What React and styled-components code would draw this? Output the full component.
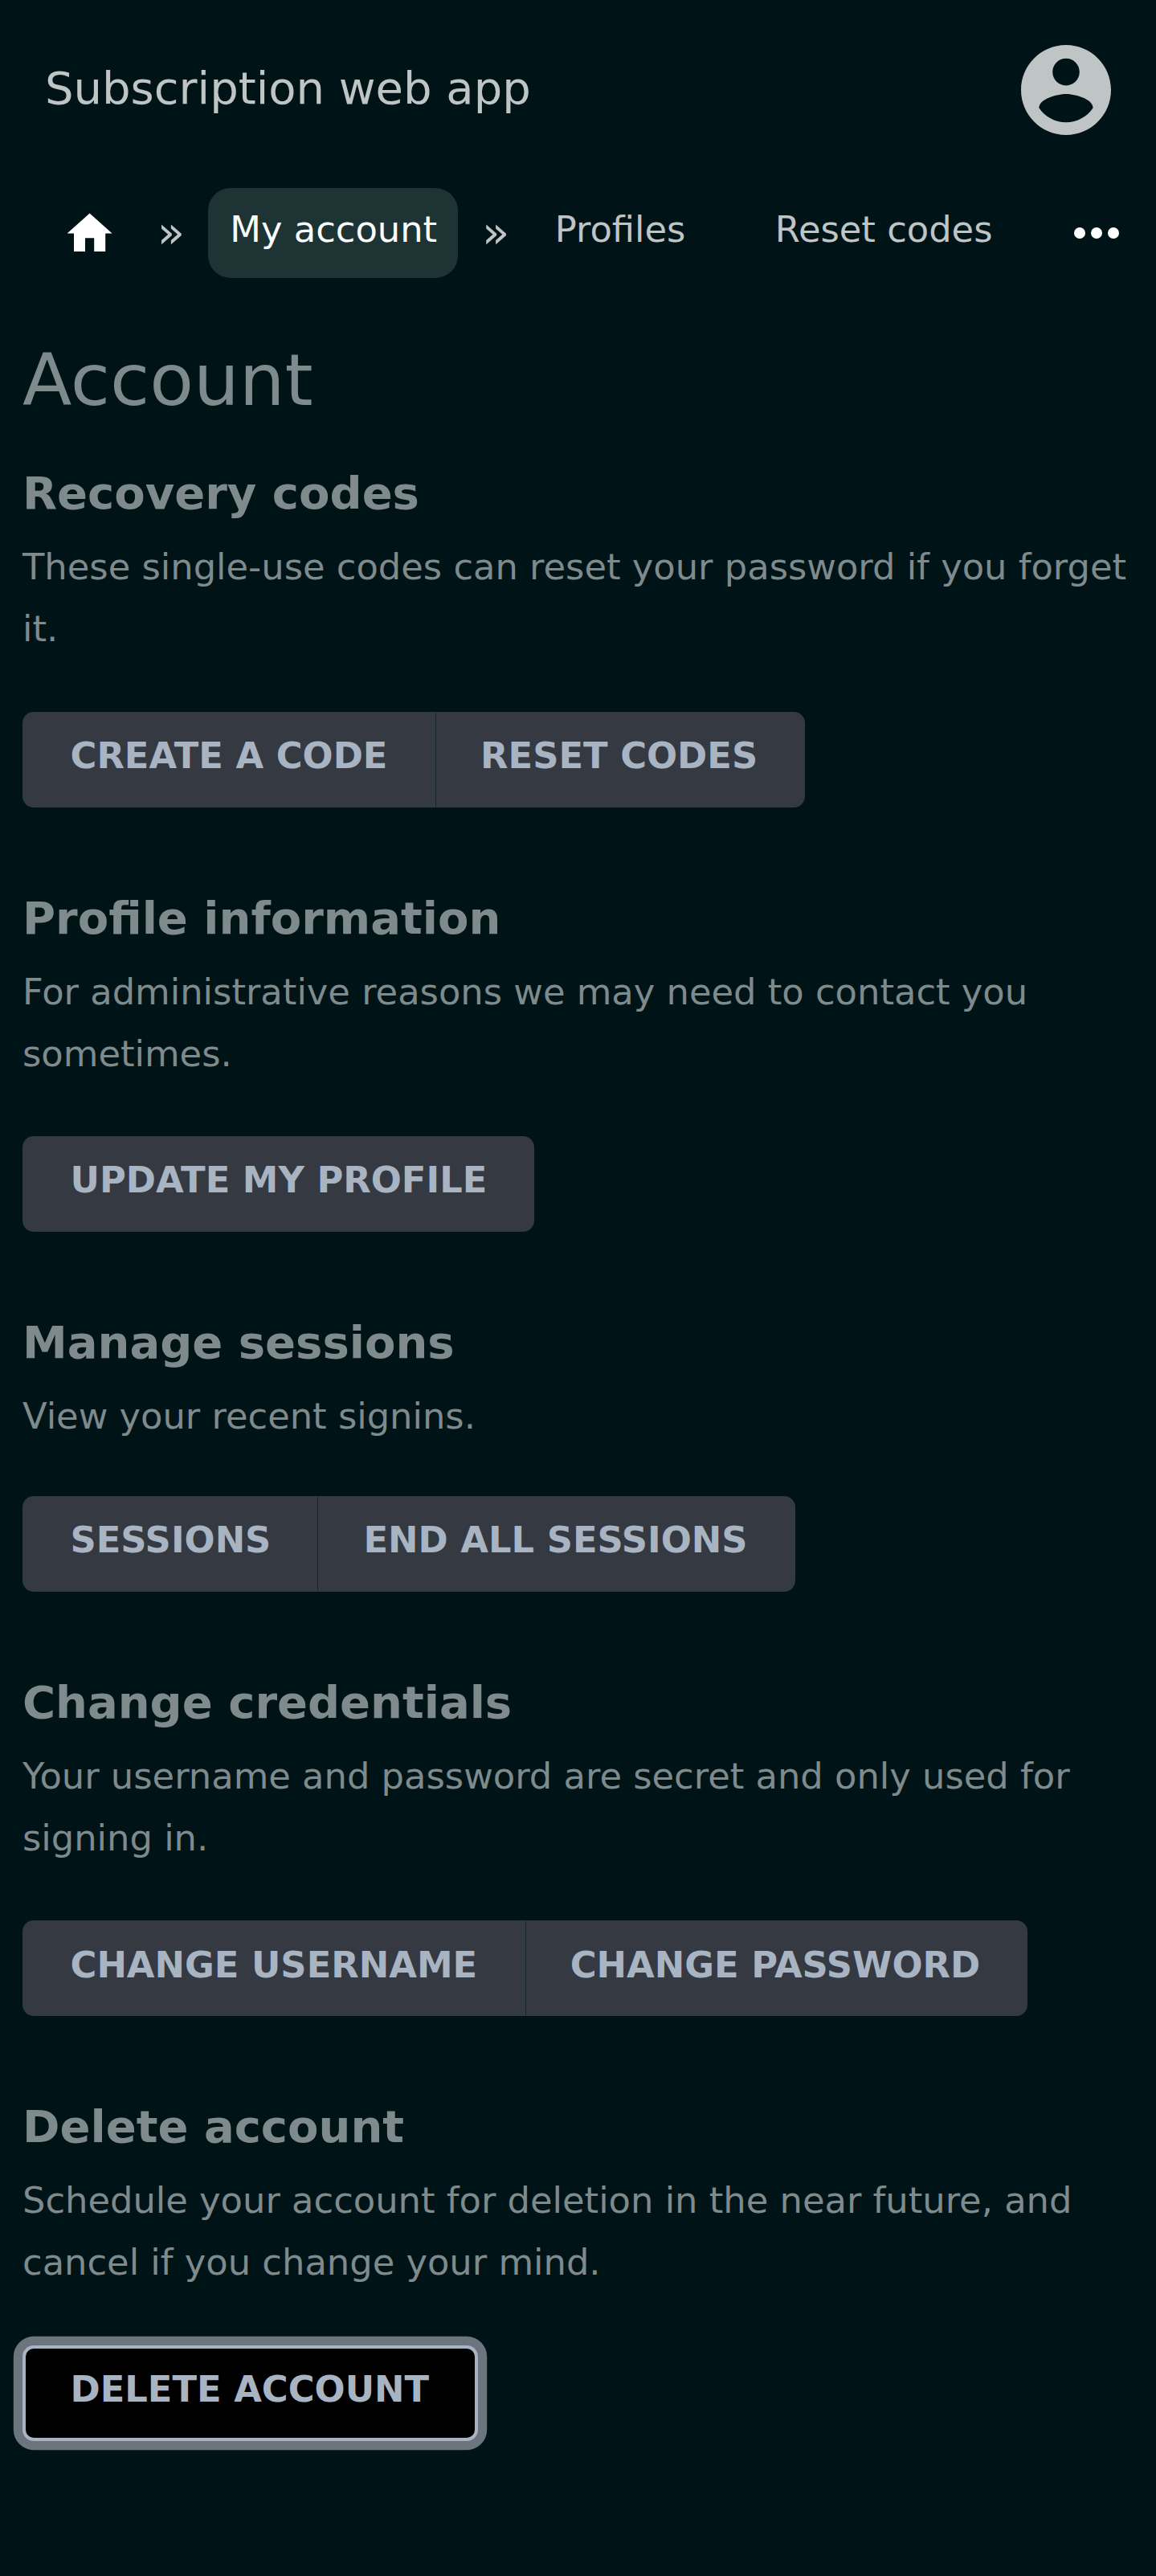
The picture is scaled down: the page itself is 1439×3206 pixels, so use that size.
import React from "react";
import styled, { createGlobalStyle, css } from "styled-components";

const GlobalStyle = createGlobalStyle`
  * { box-sizing: border-box; }
  body {
    margin: 0;
    min-height: 3206px;
    background: #001418;
    color: #7f8a8c;
    font-family: "DejaVu Sans", sans-serif;
    font-size: 44.8px;
    line-height: 77px;
  }
`;

const Header = styled.header`
  display: flex;
  justify-content: space-between;
  align-items: center;
  height: 224px;
  padding: 0 56px;
`;

const Brand = styled.div`
  color: #bfc4c5;
  font-size: 56px;
  line-height: 84px;
  padding-bottom: 5px;
`;

const Avatar = styled.svg`
  width: 112px;
  height: 112px;
  fill: #bfc4c5;
`;

const Nav = styled.nav`
  display: flex;
  align-items: center;
  height: 112px;
  margin-top: 10.3px;
  padding: 0 46px 0 78.4px;
`;

const HomeIcon = styled.svg`
  width: 67.2px;
  height: 67.2px;
  margin-right: 20.2px;
  fill: #fff;
`;

const Separator = styled.span`
  margin: 0 28.8px 0 29.9px;
  padding-bottom: 3px;
  color: #bfc4c5;
  font-size: 56px;
`;

const Crumb = styled.a`
  height: 112px;
  padding: 13px 26px 0 27.6px;
  border-radius: 28px;
  color: #bfc4c5;
  white-space: nowrap;
  margin-right: ${(p) => p.$gap || 0}px;
  ${(p) => p.$active && css`
    background: #1e3334;
    color: #fafbfc;
  `}
`;

const MoreIcon = styled.svg`
  width: 56px;
  height: 14px;
  margin-left: auto;
  fill: #fff;
`;

const Main = styled.main`
  padding: 59.5px 28px 0;
`;

const Title = styled.h1`
  margin: 0 0 26.5px;
  font-size: 89.6px;
  font-weight: 400;
  line-height: 134px;
`;

const Section = styled.section`
  padding-bottom: 90px;
`;

const Heading = styled.h2`
  margin: 0;
  padding-top: 6px;
  font-size: 56px;
  font-weight: 700;
  line-height: 84px;
`;

const Text = styled.p`
  margin: 11px 0 ${(p) => (p.$short ? 60.9 : 64.4)}px;
`;

const ButtonGroup = styled.div`
  display: flex;
`;

const Button = styled.button`
  height: 119px;
  padding: 0 55.8px 9.6px 56.5px;
  border: 3px solid #353941;
  border-radius: 0;
  background: #353941;
  color: #a8b4c2;
  font: 700 44.8px/77px "DejaVu Sans", sans-serif;
  text-transform: uppercase;
  &:first-child {
    border-top-left-radius: 14px;
    border-bottom-left-radius: 14px;
  }
  &:last-child {
    border-top-right-radius: 14px;
    border-bottom-right-radius: 14px;
  }
  &:not(:last-child) {
    border-right: 0;
    padding-right: ${(p) => (p.$short ? 57.5 : 59.6)}px;
  }
  &:nth-child(2) {
    border-left: 1px solid #15252a;
    padding-left: ${(p) => (p.$short ? 56.6 : 55)}px;
    padding-right: 56px;
  }
  ${(p) => p.$focused && css`
    border: 4px solid #a8b4c2;
    padding: 0 57px 9.6px 55.5px;
    background: #000;
    box-shadow: 0 0 0 11.2px #6c757d;
  `}
`;

const sections = [
  { title: "Recovery codes", text: "These single-use codes can reset your password if you forget it.", actions: ["Create a code", "Reset codes"] },
  { title: "Profile information", text: "For administrative reasons we may need to contact you sometimes.", actions: ["Update my profile"] },
  { title: "Manage sessions", text: "View your recent signins.", actions: ["Sessions", "End all sessions"], short: true },
  { title: "Change credentials", text: "Your username and password are secret and only used for signing in.", actions: ["Change username", "Change password"] },
  { title: "Delete account", text: "Schedule your account for deletion in the near future, and cancel if you change your mind.", actions: ["Delete account"], focused: true },
];

export default function App() {
  return (
    <>
      <GlobalStyle />
      <Header>
        <Brand>Subscription web app</Brand>
        <Avatar viewBox="2 2 20 20">
          <path d="M12 2C6.48 2 2 6.48 2 12s4.48 10 10 10 10-4.48 10-10S17.52 2 12 2zm0 3c1.66 0 3 1.34 3 3s-1.34 3-3 3-3-1.34-3-3 1.34-3 3-3zm0 14.2c-2.5 0-4.71-1.28-6-3.22.03-1.99 4-3.08 6-3.08 1.99 0 5.97 1.09 6 3.08-1.29 1.94-3.5 3.22-6 3.22z" />
        </Avatar>
      </Header>
      <Nav>
        <HomeIcon viewBox="0 0 24 24">
          <path d="M10 20v-6h4v6h5v-8h3L12 3 2 12h3v8z" />
        </HomeIcon>
        <Separator>»</Separator>
        <Crumb $active>My account</Crumb>
        <Separator>»</Separator>
        <Crumb $gap={57.8}>Profiles</Crumb>
        <Crumb>Reset codes</Crumb>
        <MoreIcon viewBox="0 0 56 14">
          <circle cx="7" cy="7" r="7" />
          <circle cx="28" cy="7" r="7" />
          <circle cx="49" cy="7" r="7" />
        </MoreIcon>
      </Nav>
      <Main>
        <Title>Account</Title>
        {sections.map((s) => (
          <Section key={s.title}>
            <Heading>{s.title}</Heading>
            <Text $short={s.short}>{s.text}</Text>
            <ButtonGroup>
              {s.actions.map((a) => (
                <Button key={a} $focused={s.focused} $short={s.short}>{a}</Button>
              ))}
            </ButtonGroup>
          </Section>
        ))}
      </Main>
    </>
  );
}
